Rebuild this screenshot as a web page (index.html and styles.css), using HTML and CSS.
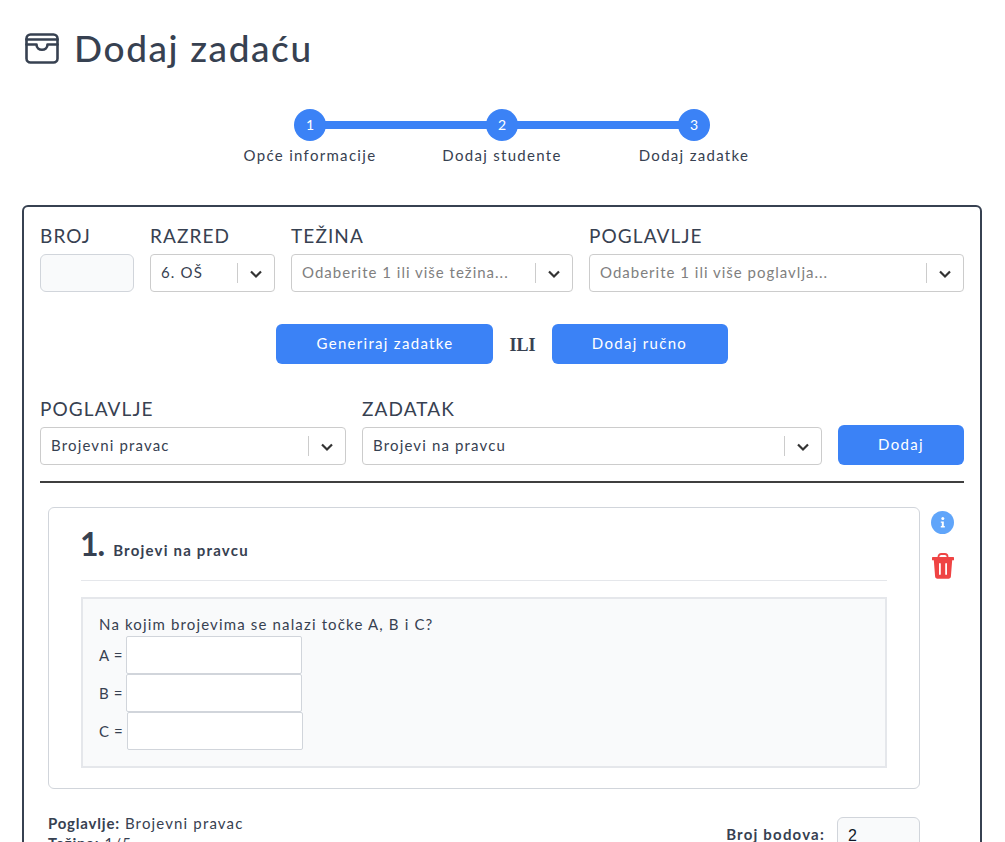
FILE: index.html
```html
<!DOCTYPE html>
<html lang="hr">
<head>
    <meta charset="UTF-8">
    <meta name="viewport" content="width=device-width, initial-scale=1.0">
    <title>Dodaj zadaću</title>
    <link rel="stylesheet" href="styles.css">
</head>
<body>

<div class="page">
    <header class="page-head">
        <svg class="head-icon" viewBox="0 0 34 31" fill="none" stroke="#374151" stroke-width="2.6" stroke-linecap="round" stroke-linejoin="round">
            <rect x="1.5" y="1.5" width="31" height="28" rx="4"></rect>
            <path d="M1.5 6.5h31"></path>
            <path d="M1.5 11.5h10c0 7 11 7 11 0h10"></path>
        </svg>
        <h1>Dodaj zadaću</h1>
    </header>

    <ol class="steps">
        <li class="step"><span class="step-dot">1</span><span class="step-name">Opće informacije</span></li>
        <li class="step"><span class="step-dot">2</span><span class="step-name">Dodaj studente</span></li>
        <li class="step"><span class="step-dot">3</span><span class="step-name">Dodaj zadatke</span></li>
    </ol>

    <section class="card">
        <div class="filter-row">
            <div class="field">
                <label class="field-label">BROJ</label>
                <input class="text-input" type="text">
            </div>
            <div class="field">
                <label class="field-label">RAZRED</label>
                <div class="select">
                    <span class="select-value">6. OŠ</span>
                    <span class="select-sep"></span>
                    <svg class="chevron" viewBox="0 0 14 10"><path d="M2 2.5l5 5 5-5"></path></svg>
                </div>
            </div>
            <div class="field">
                <label class="field-label">TEŽINA</label>
                <div class="select">
                    <span class="select-value placeholder">Odaberite 1 ili više težina...</span>
                    <span class="select-sep"></span>
                    <svg class="chevron" viewBox="0 0 14 10"><path d="M2 2.5l5 5 5-5"></path></svg>
                </div>
            </div>
            <div class="field">
                <label class="field-label">POGLAVLJE</label>
                <div class="select">
                    <span class="select-value placeholder">Odaberite 1 ili više poglavlja...</span>
                    <span class="select-sep"></span>
                    <svg class="chevron" viewBox="0 0 14 10"><path d="M2 2.5l5 5 5-5"></path></svg>
                </div>
            </div>
        </div>

        <div class="action-row">
            <button class="btn btn-generate" type="button">Generiraj zadatke</button>
            <span class="or-text">ILI</span>
            <button class="btn btn-manual" type="button">Dodaj ručno</button>
        </div>

        <div class="add-row">
            <div class="field">
                <label class="field-label">POGLAVLJE</label>
                <div class="select">
                    <span class="select-value">Brojevni pravac</span>
                    <span class="select-sep"></span>
                    <svg class="chevron" viewBox="0 0 14 10"><path d="M2 2.5l5 5 5-5"></path></svg>
                </div>
            </div>
            <div class="field">
                <label class="field-label">ZADATAK</label>
                <div class="select">
                    <span class="select-value">Brojevi na pravcu</span>
                    <span class="select-sep"></span>
                    <svg class="chevron" viewBox="0 0 14 10"><path d="M2 2.5l5 5 5-5"></path></svg>
                </div>
            </div>
            <button class="btn btn-add" type="button">Dodaj</button>
        </div>

        <hr class="divider">

        <div class="task">
            <div class="task-row">
                <div class="task-box">
                    <div class="task-head">
                        <span class="task-num">1.</span>
                        <span class="task-title">Brojevi na pravcu</span>
                    </div>
                    <div class="question">
                        <p class="question-text">Na kojim brojevima se nalazi točke A, B i C?</p>
                        <div class="answer"><span>A =</span><input class="answer-input" type="text"></div>
                        <div class="answer"><span>B =</span><input class="answer-input" type="text"></div>
                        <div class="answer answer-c"><span>C =</span><input class="answer-input" type="text"></div>
                    </div>
                </div>
                <div class="task-tools">
                    <svg class="tool-info" viewBox="0 0 23 23">
                        <circle cx="11.5" cy="11.5" r="11.5" fill="#60a5fa"></circle>
                        <circle cx="11.8" cy="7.6" r="1.5" fill="#fff"></circle>
                        <path d="M9.8 10.4h3v4.6h1v1.4H9.8V15h1v-3.2h-1z" fill="#fff"></path>
                    </svg>
                    <svg class="tool-trash" viewBox="0 0 22 26">
                        <path d="M6.5 4.5V3.6C6.5 2 7.8 1 9.2 1h3.6c1.4 0 2.7 1 2.7 2.6v.9" fill="none" stroke="#ef4444" stroke-width="1.8"></path>
                        <path d="M1 4h20c.6 0 1 .4 1 1v2.2H0V5c0-.6.4-1 1-1z" fill="#ef4444"></path>
                        <path d="M1.8 7h18.4l-1.3 16.6c-.1 1.3-1.1 2.2-2.3 2.2H5.4c-1.2 0-2.2-.9-2.3-2.2z" fill="#ef4444"></path>
                        <rect x="7" y="10" width="1.8" height="12" rx=".9" fill="#fff"></rect>
                        <rect x="13.2" y="10" width="1.8" height="12" rx=".9" fill="#fff"></rect>
                    </svg>
                </div>
            </div>

            <div class="task-meta">
                <div class="meta-info">
                    <div><b>Poglavlje:</b> Brojevni pravac</div>
                    <div><b>Težina:</b> 1/5</div>
                </div>
                <div class="meta-points">
                    <label>Broj bodova:</label>
                    <input class="points-input" type="text" value="2">
                </div>
            </div>
        </div>
    </section>
</div>

</body>
</html>
```

FILE: styles.css
```css
* {
    box-sizing: border-box;
}

html, body {
    margin: 0;
    height: 842px;
    overflow: hidden;
}

body {
    font-family: "Lato", sans-serif;
    font-size: 15px;
    letter-spacing: 1.15px;
    color: #374151;
    background-color: #fff;
}

.page {
    padding: 28px 23px 0 22px;
}

.page-head {
    display: flex;
    align-items: center;
    gap: 15px;
    height: 40px;
    padding-left: 3px;
}

.head-icon {
    width: 34px;
    height: 31px;
}

h1 {
    margin: 0;
    font-size: 37px;
    line-height: 40px;
    font-weight: 500;
    letter-spacing: 1.6px;
}

.steps {
    display: flex;
    justify-content: center;
    width: 576px;
    margin: 41px auto 0;
    padding: 0;
    list-style: none;
}

.step {
    position: relative;
    display: flex;
    flex-direction: column;
    align-items: center;
    width: 192px;
}

.step:not(:last-child)::after {
    content: "";
    position: absolute;
    top: 12px;
    left: 50%;
    width: 100%;
    height: 8px;
    background-color: #3b82f6;
}

.step-dot {
    position: relative;
    z-index: 1;
    width: 32px;
    height: 32px;
    border-radius: 50%;
    background-color: #3b82f6;
    color: #fff;
    font-size: 14px;
    letter-spacing: 0;
    text-align: center;
    line-height: 32px;
}

.step-name {
    margin-top: 4px;
    line-height: 20px;
    letter-spacing: 1.3px;
}

.card {
    margin-top: 40px;
    padding: 17px 16px 0;
    height: 700px;
    border: 2px solid #374151;
    border-radius: 6px;
}

.filter-row {
    display: grid;
    grid-template-columns: 94px 125px 282px 1fr;
    gap: 16px;
}

.field-label {
    display: block;
    margin-bottom: 6px;
    font-size: 19px;
    line-height: 24px;
    letter-spacing: 1.1px;
}

.text-input {
    display: block;
    width: 100%;
    height: 38px;
    border: 1px solid #d1d5db;
    border-radius: 6px;
    background-color: #f9fafb;
}

.select {
    display: flex;
    align-items: center;
    height: 38px;
    padding-left: 10px;
    border: 1px solid #ccc;
    border-radius: 4px;
    background-color: #fff;
}

.select-value {
    flex: 1;
    padding-bottom: 2px;
    white-space: nowrap;
    overflow: hidden;
}

.placeholder {
    color: #808080;
    letter-spacing: 1px;
}

.select-sep {
    width: 1px;
    height: 20px;
    background-color: #ccc;
}

.chevron {
    width: 14px;
    height: 10px;
    margin: 1px 11px 0;
    fill: none;
    stroke: #333;
    stroke-width: 2.2;
}

.action-row {
    display: flex;
    justify-content: center;
    align-items: center;
    gap: 16px;
    margin-top: 32px;
}

.btn {
    height: 40px;
    padding: 0 0 3px;
    border: 0;
    border-radius: 6px;
    background-color: #3b82f6;
    color: #fff;
    font-family: inherit;
    font-size: 15px;
    letter-spacing: 1.3px;
}

.btn-generate {
    width: 217px;
}

.btn-manual {
    width: 176px;
}

.or-text {
    font-family: "Liberation Serif", serif;
    font-size: 18px;
    font-weight: bold;
    letter-spacing: 0;
    padding-top: 3px;
}

.add-row {
    display: grid;
    grid-template-columns: 306px 460px 1fr;
    gap: 16px;
    align-items: end;
    margin-top: 33px;
}

.btn-add {
    width: 100%;
}

.divider {
    height: 2px;
    margin: 16px 0 0;
    border: 0;
    background-color: #3f3f3f;
}

.task {
    padding: 24px 0 0 8px;
}

.task-row {
    display: flex;
    gap: 11px;
}

.task-box {
    width: 872px;
    height: 282px;
    padding: 0 32px;
    border: 1px solid #d1d5db;
    border-radius: 6px;
}

.task-head {
    display: flex;
    align-items: baseline;
    gap: 9px;
    height: 73px;
    padding-top: 16px;
    border-bottom: 1px solid #e5e7eb;
}

.task-num {
    margin-left: -1px;
    font-size: 32px;
    line-height: 40px;
    font-weight: bold;
    letter-spacing: -1px;
}

.task-title {
    font-weight: bold;
    letter-spacing: 1.2px;
}

.question {
    height: 171px;
    margin-top: 16px;
    padding: 13px 16px 16px;
    border: 2px solid #e5e7eb;
    background-color: #f9fafb;
}

.question-text {
    margin: 0;
    line-height: 24px;
}

.answer {
    display: flex;
    align-items: center;
    gap: 4px;
}

.answer span {
    flex-shrink: 0;
    width: 23px;
    white-space: nowrap;
    letter-spacing: 0.6px;
}

.answer-c span {
    width: 24px;
}

.answer-input {
    width: 176px;
    height: 38px;
    border: 1px solid #d1d5db;
    border-radius: 2px;
    background-color: #fff;
}

.task-tools {
    display: flex;
    flex-direction: column;
    align-items: center;
    gap: 19px;
    padding-top: 4px;
}

.tool-info {
    width: 23px;
    height: 23px;
}

.tool-trash {
    width: 22px;
    height: 26px;
}

.task-meta {
    display: flex;
    justify-content: space-between;
    width: 872px;
    margin-top: 24px;
}

.meta-info {
    line-height: 20px;
}

.meta-info b {
    letter-spacing: 0.8px;
}

.meta-points {
    display: flex;
    align-items: center;
    gap: 12px;
    height: 38px;
    margin-top: 4px;
    font-weight: bold;
    letter-spacing: 1.2px;
}

.meta-points label {
    margin-bottom: 5px;
}

.points-input {
    width: 83px;
    height: 38px;
    padding: 0 10px;
    border: 1px solid #d1d5db;
    border-radius: 6px;
    background-color: #f9fafb;
    font-family: "Liberation Sans", sans-serif;
    font-size: 16px;
    color: #111827;
}
```
